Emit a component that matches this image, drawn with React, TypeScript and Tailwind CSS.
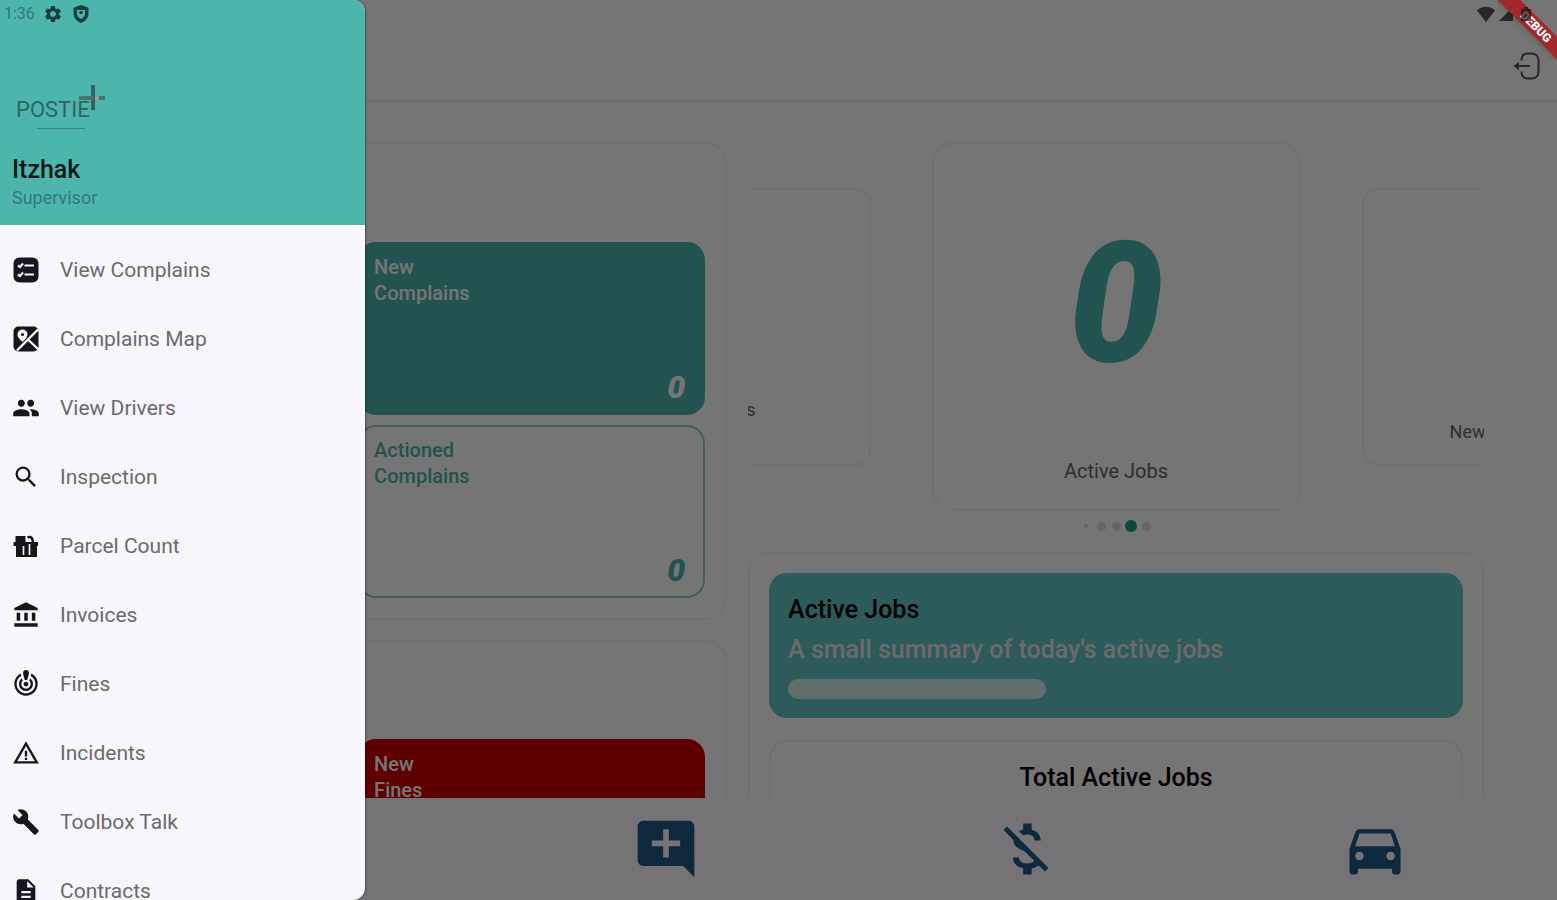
import type { ComponentType, ReactNode } from "react";
import {
  MdAccountBalance,
  MdAddComment,
  MdBuild,
  MdCrisisAlert,
  MdDescription,
  MdDirectionsCar,
  MdMoneyOff,
  MdPeople,
  MdSearch,
  MdSettings,
  MdWarningAmber,
} from "react-icons/md";

type IconProps = { className?: string };

function ComplainsIcon({ className }: IconProps) {
  return (
    <svg viewBox="0 0 28 28" className={className} aria-hidden="true">
      <rect x="1.5" y="1.5" width="25" height="25" rx="6" fill="currentColor" />
      <g stroke="#f7f6fb" strokeWidth="2.2" fill="none">
        <path d="M6 9.500l2 1.500 3-3.500M12.500 9.500H22M6 18.500l2 1.500 3-3.500M12.500 18.500H22" />
      </g>
    </svg>
  );
}

function MapIcon({ className }: IconProps) {
  return (
    <svg viewBox="0 0 28 28" className={className} aria-hidden="true">
      <rect x="1.500" y="1.500" width="25" height="25" rx="5" fill="currentColor" />
      <path
        d="M10.500 4.500a5 5 0 0 1 5 5c0 3.500-5 7.500-5 7.500s-5-4-5-7.500a5 5 0 0 1 5-5z"
        fill="#f7f6fb"
      />
      <circle cx="10.500" cy="9.500" r="1.600" fill="currentColor" />
      <path d="M26 4.500L5 25.500M16.500 15l10 9.500" stroke="#f7f6fb" strokeWidth="2.4" />
    </svg>
  );
}

function ParcelIcon({ className }: IconProps) {
  return (
    <svg viewBox="0 0 28 28" className={className} aria-hidden="true">
      <g fill="currentColor">
        <path d="M3.500 4h10v7h-10zM1.500 10h24.500v4h-24.500zM4 14h21v11H4z" />
        <path
          d="M15.500 5.500C19 4 21 6 21 11"
          fill="none"
          stroke="currentColor"
          strokeWidth="2.6"
        />
      </g>
      <path d="M11.500 14v9M17.500 12v11" stroke="#f7f6fb" strokeWidth="1.600" />
    </svg>
  );
}

function ShieldIcon({ className }: IconProps) {
  return (
    <svg viewBox="0 0 20 20" className={className} aria-hidden="true">
      <path
        d="M10 1l7.500 2.800v5.700c0 4.500-3.200 7.900-7.500 9.500-4.300-1.600-7.500-5-7.500-9.500V3.800z"
        fill="currentColor"
      />
      <path d="M6 6h8v3.500c0 2.500-1.800 4.300-4 5.500-2.200-1.200-4-3-4-5.500z" fill="#4db6ac" />
      <circle cx="10" cy="8.500" r="1.800" fill="currentColor" />
    </svg>
  );
}

function LogoutIcon({ className }: IconProps) {
  return (
    <svg viewBox="0 0 28 28" className={className} aria-hidden="true">
      <path
        d="M8.500 8.500C8.500 4 11 1.500 14.500 1.500h4C23 1.500 25.500 4.500 25.500 8.500v11c0 4-2.500 7-7 7h-4c-3.500 0-6-2.500-6-7"
        fill="none"
        stroke="currentColor"
        strokeWidth="2"
      />
      <path d="M4 14h13" stroke="currentColor" strokeWidth="2" />
      <path d="M0.500 14L6 9.800v8.400z" fill="currentColor" />
    </svg>
  );
}

const menu: { label: string; Icon: ComponentType<IconProps> }[] = [
  { label: "View Complains", Icon: ComplainsIcon },
  { label: "Complains Map", Icon: MapIcon },
  { label: "View Drivers", Icon: MdPeople },
  { label: "Inspection", Icon: MdSearch },
  { label: "Parcel Count", Icon: ParcelIcon },
  { label: "Invoices", Icon: MdAccountBalance },
  { label: "Fines", Icon: MdCrisisAlert },
  { label: "Incidents", Icon: MdWarningAmber },
  { label: "Toolbox Talk", Icon: MdBuild },
  { label: "Contracts", Icon: MdDescription },
];

function Drawer() {
  return (
    <aside className="absolute inset-y-0 left-0 flex w-[365px] flex-col overflow-hidden rounded-r-xl bg-[#f7f6fb] shadow-[1px_0_2px_rgba(0,0,0,0.35)]">
      <header className="flex h-[225px] shrink-0 flex-col bg-[#4db6ac]">
        <div className="flex h-7 items-center gap-2 pl-1 text-[#173f3c]">
          <span className="text-base text-[#2f7b74]">1:36</span>
          <MdSettings className="size-5" />
          <ShieldIcon className="size-5" />
        </div>
        <div className="mt-14 flex h-12 items-start pl-4 text-[#2c6660]">
          <div className="flex flex-col items-center pt-3">
            <span className="text-[22px] leading-7">POSTIE</span>
            <span className="mt-1 ml-4 h-px w-12 bg-[#39857d]" />
          </div>
          <svg viewBox="0 0 28 28" className="-ml-3 size-7" aria-hidden="true">
            <path d="M15 1v25" stroke="#3a5f62" strokeWidth="4" />
            <path d="M1 14h14M21 14h6" stroke="#3f7775" strokeWidth="4" />
            <circle cx="18.500" cy="14" r="1.800" fill="#c98f72" />
          </svg>
        </div>
        <div className="mt-6 pl-3">
          <h1 className="text-[25px] leading-7 font-medium text-[#0b1a19]">Itzhak</h1>
          <p className="text-lg leading-7 text-[#2f7b74]">Supervisor</p>
        </div>
      </header>
      <nav className="flex flex-col pt-[10px]">
        {menu.map(({ label, Icon }) => (
          <a
            key={label}
            href="#"
            className="flex h-[69px] shrink-0 items-center gap-5 pl-3 text-[#17161f]"
          >
            <Icon className="size-7 shrink-0" />
            <span className="text-[21px] leading-7 text-[#6b6a70]">{label}</span>
          </a>
        ))}
      </nav>
    </aside>
  );
}

function Panel({ className, children }: { className: string; children: ReactNode }) {
  return (
    <section className={`shrink-0 rounded-[22px] border-2 border-[#f4f4f4] ${className}`}>
      {children}
    </section>
  );
}

function StatTile({ title, value, look }: { title: string; value?: number; look: string }) {
  return (
    <article
      className={`flex h-[173px] w-[347px] flex-col justify-between rounded-[18px] border-2 px-[14px] py-[10px] ${look}`}
    >
      <h2 className="w-min text-xl leading-[26px] font-medium">{title}</h2>
      {value !== undefined && (
        <span className="self-end pr-1 text-[32px] leading-8 font-black italic">{value}</span>
      )}
    </article>
  );
}

const dots = [
  "size-1 bg-[#dcdcdc]",
  "size-[9px] bg-[#dcdcdc]",
  "size-[9px] bg-[#dcdcdc]",
  "size-3 bg-[#1fa08f]",
  "size-[9px] bg-[#dcdcdc]",
];

function Carousel() {
  return (
    <div className="flex flex-col items-center">
      <div className="flex w-full items-center justify-center gap-[61px] overflow-hidden">
        <div className="flex h-[278px] w-[276px] shrink-0 items-end justify-end rounded-2xl border-2 border-[#f4f4f4] pr-[113px] pb-10 text-lg text-[#666666]">
          s
        </div>
        <article className="flex h-[369px] w-[369px] shrink-0 flex-col items-center rounded-[22px] border-2 border-[#f4f4f4] pt-[76px]">
          <span className="text-[168px] leading-[168px] font-black text-[#4db6ac] italic">0</span>
          <span className="mt-[69px] text-xl leading-7 text-[#666666]">Active Jobs</span>
        </article>
        <div className="flex h-[278px] w-[276px] shrink-0 items-end rounded-2xl border-2 border-[#f4f4f4] pb-[18px] pl-[86px] text-lg text-[#666666]">
          New
        </div>
      </div>
      <div className="mt-[7px] flex h-4">
        {dots.map((dot, i) => (
          <span key={i} className="flex w-[15px] items-center justify-center">
            <span className={`rounded-full ${dot}`} />
          </span>
        ))}
      </div>
    </div>
  );
}

export default function App() {
  return (
    <div className="relative flex h-screen flex-col overflow-hidden bg-white font-[Roboto,sans-serif]">
      <header className="flex h-[102px] shrink-0 flex-col items-end border-b-2 border-[#f0f0f0] pr-4">
        <div className="flex h-7 items-center gap-1 pr-7 text-[#555555]">
          <svg viewBox="0 0 18 16" className="h-4 w-[18px]" aria-hidden="true">
            <path d="M0 4.500C5-.5 13-.5 18 4.500L9 16z" fill="currentColor" />
          </svg>
          <svg viewBox="0 0 14 14" className="size-[14px]" aria-hidden="true">
            <path d="M14 0v14H0z" fill="currentColor" />
          </svg>
        </div>
        <button type="button" aria-label="Log out" className="mt-6 text-[#555555]">
          <LogoutIcon className="size-7" />
        </button>
      </header>

      <main className="grid min-h-0 flex-1 grid-cols-[8fr_9fr] gap-[21px] overflow-hidden px-[73px] pt-10">
        <div className="flex flex-col gap-5">
          <Panel className="flex h-[478px] flex-col items-end gap-[10px] pt-[98px] pr-5">
            <StatTile
              title="New Complains"
              value={0}
              look="border-[#4db6ac] bg-[#4db6ac] text-white"
            />
            <StatTile
              title="Actioned Complains"
              value={0}
              look="border-[#8fcfc6] text-[#4db6ac]"
            />
          </Panel>
          <Panel className="flex h-[478px] flex-col items-end pt-[97px] pr-5">
            <StatTile title="New Fines" look="border-[#cc0000] bg-[#cc0000] text-white" />
          </Panel>
        </div>

        <div className="flex min-w-0 flex-col">
          <Carousel />
          <Panel className="mt-[18px] flex flex-col gap-[22px] p-[19px]">
            <article className="flex h-[145px] flex-col rounded-[18px] bg-[#62c6c2] px-[19px] pt-[17px]">
              <h2 className="text-[25px] leading-10 font-medium text-black">Active Jobs</h2>
              <p className="text-[25px] leading-10 font-medium text-[#eaeaea]">
                A small summary of today's active jobs
              </p>
              <div className="mt-[9px] h-5 w-[258px] rounded-full bg-[#d3f0ec]" />
            </article>
            <article className="h-72 rounded-[18px] border-2 border-[#f4f4f4] pt-4 text-center">
              <h2 className="text-[25px] leading-10 font-medium text-black">Total Active Jobs</h2>
            </article>
          </Panel>
        </div>
      </main>

      <nav className="grid h-[102px] shrink-0 grid-cols-[360fr_360fr_338fr] items-center justify-items-center bg-[#fffaff] pr-[13px] pl-[486px] text-[#1f5a88]">
        <button type="button" aria-label="Add complain">
          <MdAddComment className="size-[68px]" />
        </button>
        <button type="button" aria-label="Fines">
          <MdMoneyOff className="size-[68px]" />
        </button>
        <button type="button" aria-label="Drivers">
          <MdDirectionsCar className="size-[68px]" />
        </button>
      </nav>

      <div className="absolute inset-0 bg-black/54" />
      <Drawer />

      <div className="absolute top-0 right-0 size-[60px] overflow-hidden">
        <div className="absolute top-4 -left-[14px] flex h-4 w-[100px] rotate-45 items-center justify-center bg-[#a3262a] pl-2 text-xs font-black text-white shadow-md">
          DEBUG
        </div>
        <svg viewBox="0 0 10 14" className="absolute top-[7px] left-6 h-[14px] w-[10px]" aria-hidden="true">
          <path d="M3 0h4v2h3v12H0V2h3z" fill="#1c1214" fillOpacity="0.7" />
        </svg>
      </div>
    </div>
  );
}
